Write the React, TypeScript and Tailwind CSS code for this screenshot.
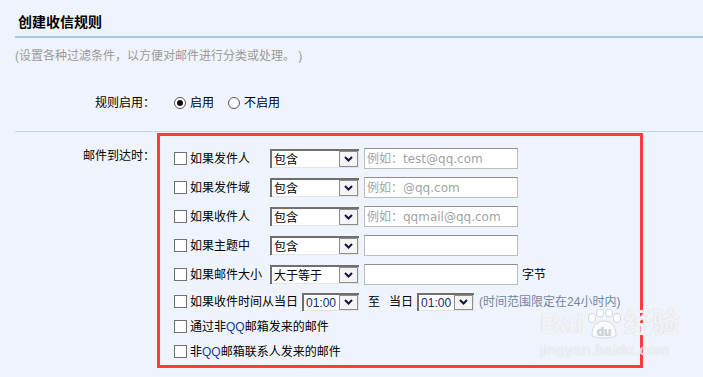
import React from "react";

const rows = [
  { label: "如果发件人", op: "包含", hint: "例如：test@qq.com" },
  { label: "如果发件域", op: "包含", hint: "例如：@qq.com" },
  { label: "如果收件人", op: "包含", hint: "例如：qqmail@qq.com" },
  { label: "如果主题中", op: "包含", hint: "" },
  { label: "如果邮件大小", op: "大于等于", hint: "", unit: "字节" },
];

function Chevron() {
  return (
    <svg width="9" height="6" viewBox="0 0 9 6">
      <path d="M1 1 L4.5 4.5 L8 1" fill="none" stroke="#14143c" strokeWidth="2" />
    </svg>
  );
}

function Select({ value, w, h, blue }: { value: string; w: string; h: string; blue?: boolean }) {
  return (
    <div
      className={`${w} ${h} flex shrink-0 border-t-2 border-l-2 border-t-[#6f6f6f] border-l-[#6f6f6f] bg-[#e4e4e4] pr-[1px] pb-[1px]`}
    >
      <div className={`flex flex-1 items-center bg-white pl-[2px] pt-[1px] leading-[14px] ${blue ? "text-[#0c2a78]" : "text-black"}`}>
        {value}
      </div>
      <div className="w-[19px] h-full border border-[#8e8e8e] bg-[#f4f4f4] flex items-center justify-center">
        <Chevron />
      </div>
    </div>
  );
}

function Checkbox() {
  return <span className="w-[13px] h-[13px] shrink-0 border border-[#707070] bg-white" />;
}

function Radio({ on }: { on?: boolean }) {
  return (
    <span className="w-[12px] h-[12px] rounded-full border border-[#555] bg-white flex items-center justify-center">
      {on && <span className="w-[6px] h-[6px] rounded-full bg-[#111]" />}
    </span>
  );
}

export default function App() {
  return (
    <div className="relative w-[703px] h-[377px] overflow-hidden bg-[#eff4fc] text-[12px] text-black font-['Liberation_Sans','Noto_Sans_CJK_SC',sans-serif]">
      {/* Title */}
      <div className="ml-[15px] h-[38px] border-b-2 border-[#a9c8ec] pl-[3px] pt-[14px]">
        <h1 className="text-[14px] font-bold leading-[17px]">创建收信规则</h1>
      </div>
      <p className="ml-[15px] mt-[10px] leading-[16px] text-[#9a9a9a]">(设置各种过滤条件，以方便对邮件进行分类或处理。 )</p>

      {/* Enable */}
      <div className="mt-[31px] flex h-[16px] items-center">
        <div className="w-[155px] text-right">规则启用：</div>
        <div className="ml-[19px] flex items-center">
          <Radio on />
          <span className="ml-[4px]">启用</span>
          <span className="ml-[14px]">
            <Radio />
          </span>
          <span className="ml-[4px]">不启用</span>
        </div>
      </div>

      <div className="ml-[15px] mt-[20px] border-t border-[#c6d6e5]" />

      {/* Conditions */}
      <div className="mt-[1px] flex">
        <div className="w-[155px] pt-[15px] text-right leading-[16px]">邮件到达时：</div>
        <div className="ml-[2px] w-[486px] border-[3px] border-[#ff3b3b] pt-[8px] pb-[1px] pl-[14px]">
          {rows.map((r) => (
            <div key={r.label} className="flex h-[29px] items-center">
              <Checkbox />
              <span className="ml-[3px] w-[80px]">{r.label}</span>
              <Select value={r.op} w="w-[89px]" h="h-[19px]" />
              <input
                readOnly
                placeholder={r.hint}
                className="ml-[5px] w-[154px] h-[21px] border border-[#bdbdbd] border-t-[#8f8f8f] bg-white px-[2px] text-[12px] outline-none placeholder:text-[#a3a3a3] font-['DejaVu_Sans','Noto_Sans_CJK_SC',sans-serif]"
              />
              {r.unit && <span className="ml-[4px]">{r.unit}</span>}
            </div>
          ))}
          <div className="flex h-[25px] items-center">
            <Checkbox />
            <span className="ml-[3px]">如果收件时间从当日</span>
            <span className="ml-[4px]">
              <Select value="01:00" w="w-[57px]" h="h-[18px]" blue />
            </span>
            <span className="ml-[9px]">至</span>
            <span className="ml-[9px]">当日</span>
            <span className="ml-[4px]">
              <Select value="01:00" w="w-[57px]" h="h-[18px]" blue />
            </span>
            <span className="ml-[5px] text-[#7484a3]">(时间范围限定在24小时内)</span>
          </div>
          <div className="flex h-[25px] items-center">
            <Checkbox />
            <span className="ml-[3px]">
              通过非<span className="text-[#0b3c9c]">QQ</span>邮箱发来的邮件
            </span>
          </div>
          <div className="flex h-[25px] items-center">
            <Checkbox />
            <span className="ml-[3px]">
              非<span className="text-[#0b3c9c]">QQ</span>邮箱联系人发来的邮件
            </span>
          </div>
        </div>
      </div>

      {/* Watermark */}
      <div className="pointer-events-none absolute left-[540px] top-[309px] select-none text-white/80 [text-shadow:0_0_1px_#b9bcc4] font-['Liberation_Sans','Noto_Sans_CJK_SC',sans-serif]">
        <div className="flex items-end text-[28px] font-bold leading-[30px]">
          <span>Bai</span>
          <svg width="40" height="30" viewBox="0 0 40 30" className="opacity-80">
            <g fill="#fff" stroke="#c2c5cc" strokeWidth="0.8">
              <ellipse cx="8" cy="9" rx="3.5" ry="4.5" />
              <ellipse cx="16" cy="4" rx="3.5" ry="4" />
              <ellipse cx="25" cy="4" rx="3.5" ry="4" />
              <ellipse cx="33" cy="9" rx="3.5" ry="4.5" />
              <path d="M8 26 C8 16 14 12 20 12 C26 12 32 16 32 26 C32 30 8 30 8 26 Z" />
            </g>
            <text x="20" y="27" textAnchor="middle" fontSize="12" fontWeight="bold" fill="#c8cbd2">du</text>
          </svg>
          <span>经验</span>
        </div>
        <div className="mt-[3px] text-[15px] leading-[16px] tracking-[0.5px]">jingyan.baidu.com</div>
      </div>
    </div>
  );
}
